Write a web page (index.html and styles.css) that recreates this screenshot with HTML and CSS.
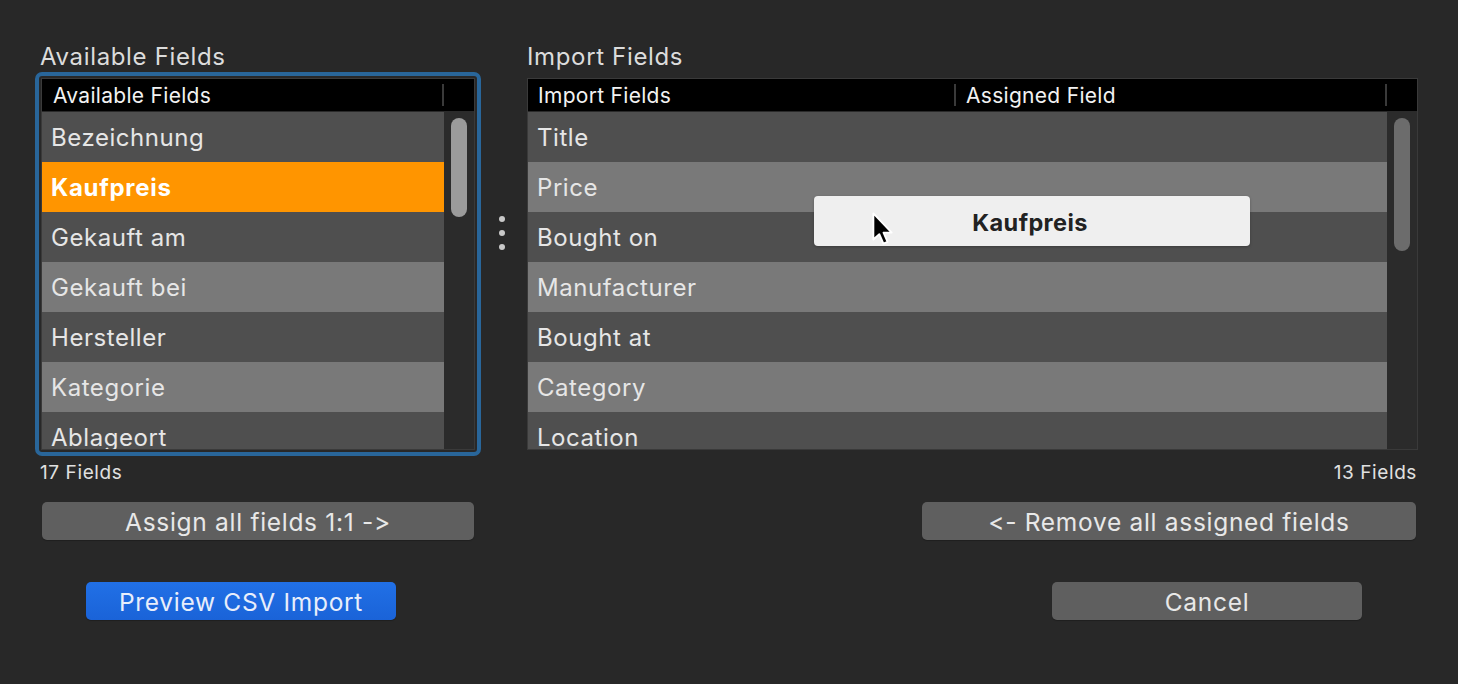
FILE: index.html
```html
<!DOCTYPE html>
<html>
<head>
<meta charset="utf-8">
<link rel="stylesheet" href="styles.css">
</head>
<body>
<div class="page">
  <div class="columns">
    <div class="col col-left">
      <div class="title title-left">Available Fields</div>
      <div class="frame frame-focus">
        <div class="table table-left">
          <div class="thead">
            <div class="th th-avail">Available Fields</div>
            <div class="th-sep"></div>
            <div class="th-rest"></div>
          </div>
          <div class="tbody">
            <div class="rows">
              <div class="row dark">Bezeichnung</div>
              <div class="row selected">Kaufpreis</div>
              <div class="row dark">Gekauft am</div>
              <div class="row light">Gekauft bei</div>
              <div class="row dark">Hersteller</div>
              <div class="row light">Kategorie</div>
              <div class="row dark">Ablageort</div>
            </div>
            <div class="track"><div class="thumb thumb-left"></div></div>
          </div>
        </div>
      </div>
      <div class="count">17 Fields</div>
      <button class="btn btn-assign">Assign all fields 1:1 -&gt;</button>
    </div>

    <div class="col col-mid">
      <div class="dots"><span></span><span></span><span></span></div>
    </div>

    <div class="col col-right">
      <div class="title title-right">Import Fields</div>
      <div class="frame frame-plain">
        <div class="table table-right">
          <div class="thead">
            <div class="th th-import">Import Fields</div>
            <div class="th-sep"></div>
            <div class="th th-assigned">Assigned Field</div>
            <div class="th-sep"></div>
            <div class="th-rest"></div>
          </div>
          <div class="tbody">
            <div class="rows">
              <div class="row dark">Title</div>
              <div class="row light">Price</div>
              <div class="row dark">Bought on</div>
              <div class="row light">Manufacturer</div>
              <div class="row dark">Bought at</div>
              <div class="row light">Category</div>
              <div class="row dark">Location</div>
            </div>
            <div class="track"><div class="thumb thumb-right"></div></div>
          </div>
        </div>
      </div>
      <div class="count count-right">13 Fields</div>
      <button class="btn btn-remove">&lt;- Remove all assigned fields</button>
    </div>
  </div>

  <div class="actions">
    <button class="btn btn-primary">Preview CSV Import</button>
    <button class="btn btn-cancel">Cancel</button>
  </div>

  <div class="drag-item">Kaufpreis</div>
  <svg class="cursor" width="26" height="36" viewBox="0 0 22 30">
    <path d="M2 1 L2 23 L7 18.5 L10.5 26.5 L14 25 L10.6 17.2 L17.5 17.2 Z" fill="#000" stroke="#fff" stroke-width="1.6" stroke-linejoin="round"/>
  </svg>
</div>
</body>
</html>
```

FILE: styles.css
```css
* { box-sizing: border-box; }
html, body {
  margin: 0;
  padding: 0;
  background: #282828;
  width: 1458px;
  height: 684px;
  overflow: hidden;
  font-family: Inter, "Open Sans", "Liberation Sans", sans-serif;
  font-variant-ligatures: none;
  font-feature-settings: "calt" 0, "liga" 0;
  color: #e4e4e4;
}
.page {
  position: relative;
  width: 1458px;
  height: 684px;
  padding: 42px 0 0 35px;
}
.columns {
  display: flex;
}
.col {
  display: flex;
  flex-direction: column;
}
.col-left { width: 446px; }
.col-mid { width: 40px; align-items: center; padding-top: 174px; }
.col-right { width: 903px; }

.title {
  font-size: 24px;
  line-height: 28px;
  height: 30px;
  padding-top: 1px;
  color: #dcdcdc;
  letter-spacing: 0.65px;
}
.title-left { padding-left: 5px; }
.title-right { padding-left: 6px; }

.frame {
  border: 4px solid transparent;
  border-radius: 7px;
  padding: 2px;
}
.frame-focus { border-color: #29669a; }

.table {
  border: 1px solid #3a3a3a;
  background: #2b2b2b;
  display: flex;
  flex-direction: column;
  height: 372px;
  overflow: hidden;
}
.thead {
  display: flex;
  align-items: center;
  height: 33px;
  background: #000;
  border-bottom: 1px solid #2a2a2a;
  flex-shrink: 0;
}
.th {
  font-size: 21px;
  letter-spacing: 0.3px;
  color: #f2f2f2;
  line-height: 32px;
  padding-top: 2px;
  white-space: nowrap;
}
.th-avail { width: 400px; padding-left: 11px; }
.th-import { width: 426px; padding-left: 10px; }
.th-assigned { width: 429px; padding-left: 10px; }
.th-sep {
  width: 2px;
  height: 22px;
  background: #3a3a3a;
  flex-shrink: 0;
}
.th-rest { flex: 1; }

.tbody {
  display: flex;
  flex: 1;
  min-height: 0;
}
.rows {
  flex: 1;
  display: flex;
  flex-direction: column;
}
.row {
  height: 50px;
  flex-shrink: 0;
  font-size: 24px;
  letter-spacing: 0.55px;
  line-height: 48px;
  padding-top: 2px;
  padding-left: 9px;
  color: #e6e6e6;
  white-space: nowrap;
}
.row.dark { background: #4f4f4f; }
.row.light { background: #797979; }
.row.selected { background: #ff9500; color: #fff; font-weight: 700; letter-spacing: 0.7px; }

.track {
  width: 30px;
  background: #2b2b2b;
  padding-top: 6px;
  display: flex;
  justify-content: center;
  flex-shrink: 0;
}
.thumb {
  width: 16px;
  border-radius: 8px;
}
.thumb-left { height: 99px; background: #9b9b9b; }
.thumb-right { height: 133px; background: #6c6c6c; }

.count {
  font-size: 19px;
  letter-spacing: 0.6px;
  line-height: 20px;
  margin-top: 6px;
  padding-top: 1px;
  padding-left: 5px;
  color: #e0e0e0;
}
.count-right { text-align: right; padding-right: 7px; }

.btn {
  font-family: inherit;
  font-variant-ligatures: none;
  font-feature-settings: "calt" 0, "liga" 0;
  font-size: 24.5px;
  letter-spacing: 0.7px;
  color: #e8e8e8;
  background: #5f5f5f;
  border: none;
  border-radius: 5px;
  height: 38px;
  padding: 2px 0 0 0;
  line-height: 36px;
  box-shadow: 0 1px 1px rgba(0,0,0,0.25);
}
.btn-assign {
  margin-top: 19px;
  margin-left: 7px;
  width: 432px;
}
.btn-remove {
  margin-top: 19px;
  align-self: flex-end;
  margin-right: 8px;
  width: 494px;
}

.dots {
  display: flex;
  flex-direction: column;
  gap: 8px;
  margin-left: 1px;
}
.dots span {
  width: 6px;
  height: 6px;
  border-radius: 50%;
  background: #c8c8c8;
}

.actions {
  display: flex;
  justify-content: space-between;
  margin-top: 42px;
  padding-left: 51px;
  padding-right: 96px;
}
.btn-primary {
  width: 310px;
  background: linear-gradient(#2170e6, #1a63d8);
  color: #e8eefb;
}
.btn-cancel { width: 310px; }

.drag-item {
  position: absolute;
  left: 814px;
  top: 196px;
  width: 436px;
  height: 50px;
  background: #efefef;
  border-radius: 4px;
  color: #222;
  font-weight: 700;
  font-size: 23.5px;
  letter-spacing: 0.4px;
  text-align: center;
  line-height: 54px;
  padding-right: 4px;
  box-shadow: 0 1px 3px rgba(0,0,0,0.25);
}
.cursor {
  position: absolute;
  left: 871px;
  top: 212px;
}
```
